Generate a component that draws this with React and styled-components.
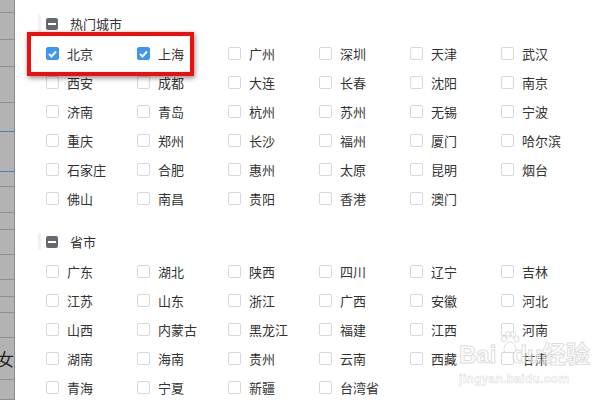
import styled, { createGlobalStyle } from 'styled-components';

const GlobalStyle = createGlobalStyle`
  html, body {
    margin: 0;
    padding: 0;
    background: #ffffff;
    font-family: "Noto Sans CJK SC", "Liberation Sans", sans-serif;
  }
`;

const hotCities = [
  '北京', '上海', '广州', '深圳', '天津', '武汉',
  '西安', '成都', '大连', '长春', '沈阳', '南京',
  '济南', '青岛', '杭州', '苏州', '无锡', '宁波',
  '重庆', '郑州', '长沙', '福州', '厦门', '哈尔滨',
  '石家庄', '合肥', '惠州', '太原', '昆明', '烟台',
  '佛山', '南昌', '贵阳', '香港', '澳门',
];

const provinces = [
  '广东', '湖北', '陕西', '四川', '辽宁', '吉林',
  '江苏', '山东', '浙江', '广西', '安徽', '河北',
  '山西', '内蒙古', '黑龙江', '福建', '江西', '河南',
  '湖南', '海南', '贵州', '云南', '西藏', '甘肃',
  '青海', '宁夏', '新疆', '台湾省',
];

const checked = ['北京', '上海'];

// row heights of the spreadsheet peeking out on the left
const sheetRows = [13, 27, 27, 36, 29, 40, 15, 26, 17, 25, 25, 17, 16, 25, 42, 20];

const Page = styled.div`
  display: flex;
  width: 600px;
  height: 400px;
  overflow: hidden;
  position: relative;
`;

const Sheet = styled.div`
  width: 14px;
  flex: none;
  background: #b3b3b3;
  border-right: 1px solid #8c8c8c;
  display: flex;
  flex-direction: column;
`;

const SheetCell = styled.div`
  height: ${(p) => p.$h}px;
  flex: none;
  border-bottom: 1px solid ${(p) => (p.$blue ? '#3f7fb8' : '#8f8f8f')};
  box-sizing: border-box;
  overflow: hidden;
  display: flex;
  align-items: center;
  justify-content: flex-end;
  font-size: 17px;
  color: #222;
`;

const Main = styled.div`
  flex: 1;
  padding: 15px 0 0 23px;
`;

const Section = styled.div`
  margin-bottom: 20px;
`;

const Header = styled.div`
  display: flex;
  align-items: center;
  height: 17px;
  border-left: 3px solid #eef1f6;
  padding-left: 5px;
  gap: 12px;
  font-size: 13px;
  color: #333;
`;

const Grid = styled.div`
  display: grid;
  grid-template-columns: repeat(6, 91px);
  grid-auto-rows: 29px;
  padding-left: 8px;
  margin-top: 7px;
`;

const Item = styled.label`
  display: flex;
  align-items: center;
  gap: 8px;
  font-size: 13px;
  color: #333;
`;

const Box = styled.span`
  width: 13px;
  height: 13px;
  flex: none;
  box-sizing: border-box;
  border-radius: 2px;
  border: 1px solid ${(p) => (p.$on ? '#3b97f3' : '#d5d8e0')};
  background: ${(p) => (p.$on ? '#3b97f3' : '#fff')};
  display: flex;
  align-items: center;
  justify-content: center;
`;

const HalfBox = styled.span`
  width: 12px;
  height: 12px;
  flex: none;
  border-radius: 2px;
  background: #65686f;
  display: flex;
  align-items: center;
  justify-content: center;

  &::after {
    content: '';
    width: 8px;
    height: 2px;
    background: #fff;
  }
`;

const Highlight = styled.div`
  position: absolute;
  left: 27px;
  top: 32px;
  width: 167px;
  height: 44px;
  box-sizing: border-box;
  border: 4px solid #f20d0d;
  box-shadow: 1px 2px 5px rgba(0, 0, 0, 0.45);
  pointer-events: none;
`;

const Watermark = styled.div`
  position: absolute;
  left: 459px;
  top: 343px;
  font-family: "Liberation Sans", "Noto Sans CJK SC", sans-serif;
  pointer-events: none;
  line-height: 1;
`;

const MarkBig = styled.div`
  position: relative;
  font-size: 24px;
  font-weight: bold;
  color: rgba(255, 255, 255, 0.55);
  -webkit-text-stroke: 1px rgba(205, 205, 205, 0.7);
`;

const Paw = styled.svg`
  position: absolute;
  left: 41px;
  top: -12px;
`;

const MarkSmall = styled.div`
  font-size: 12px;
  font-weight: bold;
  margin-top: 6px;
  color: rgba(255, 255, 255, 0.5);
  -webkit-text-stroke: 0.6px rgba(210, 210, 210, 0.7);
  letter-spacing: 0.3px;
`;

const Tick = () => (
  <svg width="9" height="8" viewBox="0 0 9 8">
    <path d="M1 4 L3.5 6.5 L8 1.5" fill="none" stroke="#fff" strokeWidth="2" />
  </svg>
);

const CheckGroup = ({ title, items }) => (
  <Section>
    <Header>
      <HalfBox />
      {title}
    </Header>
    <Grid>
      {items.map((name) => {
        const on = checked.includes(name);
        return (
          <Item key={name}>
            <Box $on={on}>{on && <Tick />}</Box>
            {name}
          </Item>
        );
      })}
    </Grid>
  </Section>
);

const App = () => (
  <Page>
    <GlobalStyle />
    <Sheet>
      {sheetRows.map((h, i) => (
        <SheetCell key={i} $h={h} $blue={i === 4 || i === 5}>
          {i === 14 ? '女' : ''}
        </SheetCell>
      ))}
    </Sheet>
    <Main>
      <CheckGroup title="热门城市" items={hotCities} />
      <CheckGroup title="省市" items={provinces} />
    </Main>
    <Highlight />
    <Watermark>
      <MarkBig>
        Bai<span style={{ marginLeft: 16 }}>du经验</span>
        <Paw width="20" height="24" viewBox="0 0 20 24">
          <g fill="rgba(255,255,255,0.6)" stroke="rgba(205,205,205,0.7)" strokeWidth="1">
            <ellipse cx="4" cy="8" rx="2.5" ry="3.2" />
            <ellipse cx="8" cy="3.5" rx="2.4" ry="3" />
            <ellipse cx="13" cy="3.5" rx="2.4" ry="3" />
            <ellipse cx="16.5" cy="8" rx="2.5" ry="3.2" />
            <path d="M4 19 C4 13 8 11 10 11 C12 11 16 13 16 19 C16 22 13 22 10 21 C7 22 4 22 4 19 Z" />
          </g>
        </Paw>
      </MarkBig>
      <MarkSmall>jingyan.baidu.com</MarkSmall>
    </Watermark>
  </Page>
);

export default App;
